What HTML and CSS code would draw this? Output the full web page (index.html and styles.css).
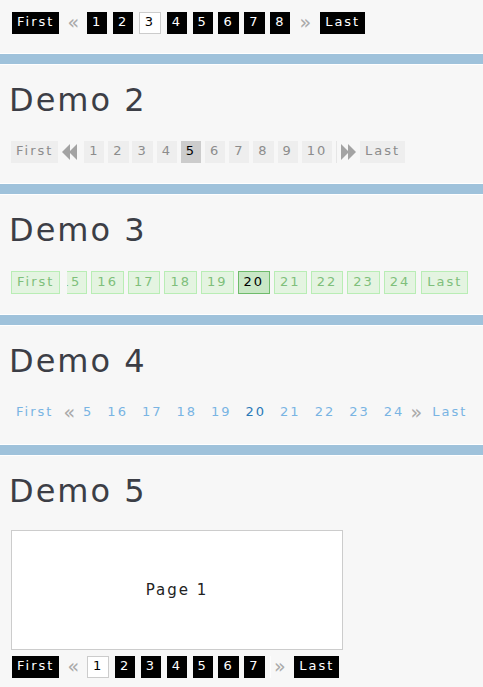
FILE: index.html
```html
<!DOCTYPE html>
<html lang="en">

<head>
    <meta charset="UTF-8">
    <title>jPages demos</title>
    <link rel="stylesheet" href="styles.css">
</head>

<body>

    <div class="demo demo-top">
        <div class="pager pager-black">
            <a href="#">First</a>
            <span class="arrow">&laquo;</span>
            <a href="#">1</a>
            <a href="#">2</a>
            <a href="#" class="current">3</a>
            <a href="#">4</a>
            <a href="#">5</a>
            <a href="#">6</a>
            <a href="#">7</a>
            <a href="#">8</a>
            <span class="arrow next">&raquo;</span>
            <a href="#">Last</a>
        </div>
    </div>
    <div class="bar"></div>

    <div class="demo">
        <h2>Demo 2</h2>
        <div class="pager pager-grey">
            <a href="#">First</a>
            <span class="icon prev">
                <svg width="15" height="16" viewBox="0 0 15 16"><polygon points="0,8 8,0 8,16" /><polygon points="7,8 15,0 15,16" /></svg>
            </span>
            <a href="#">1</a>
            <a href="#">2</a>
            <a href="#">3</a>
            <a href="#">4</a>
            <a href="#" class="current">5</a>
            <a href="#">6</a>
            <a href="#">7</a>
            <a href="#">8</a>
            <a href="#">9</a>
            <a href="#">10</a>
            <span class="icon next">
                <svg width="15" height="16" viewBox="0 0 15 16"><polygon points="0,0 8,8 0,16" /><polygon points="7,0 15,8 7,16" /></svg>
            </span>
            <a href="#">Last</a>
        </div>
    </div>
    <div class="bar"></div>

    <div class="demo">
        <h2>Demo 3</h2>
        <div class="pager pager-green">
            <a href="#">First</a>
            <a href="#" class="partial">15</a>
            <a href="#">16</a>
            <a href="#">17</a>
            <a href="#">18</a>
            <a href="#">19</a>
            <a href="#" class="current">20</a>
            <a href="#">21</a>
            <a href="#">22</a>
            <a href="#">23</a>
            <a href="#">24</a>
            <a href="#" class="last">Last</a>
        </div>
    </div>
    <div class="bar"></div>

    <div class="demo">
        <h2>Demo 4</h2>
        <div class="pager pager-blue">
            <a href="#">First</a>
            <span class="arrow">&laquo;</span>
            <a href="#" class="partial">5</a>
            <a href="#">16</a>
            <a href="#">17</a>
            <a href="#">18</a>
            <a href="#">19</a>
            <a href="#" class="current">20</a>
            <a href="#">21</a>
            <a href="#">22</a>
            <a href="#">23</a>
            <a href="#">24</a>
            <span class="arrow next">&raquo;</span>
            <a href="#">Last</a>
        </div>
    </div>
    <div class="bar"></div>

    <div class="demo demo-five">
        <h2>Demo 5</h2>
        <div class="page-box">Page 1</div>
        <div class="pager pager-black">
            <a href="#">First</a>
            <span class="arrow">&laquo;</span>
            <a href="#" class="current">1</a>
            <a href="#">2</a>
            <a href="#">3</a>
            <a href="#">4</a>
            <a href="#">5</a>
            <a href="#">6</a>
            <a href="#">7</a>
            <span class="arrow next split">&raquo;</span>
            <a href="#">Last</a>
        </div>
    </div>

</body>

</html>
```

FILE: styles.css
```css
* {
    margin: 0;
    padding: 0;
}

body {
    font-family: "DejaVu Sans", Verdana, sans-serif;
    background: #f7f7f7;
    color: #3c3e46;
}

.demo {
    padding: 17px 11px 20px;
}

.demo-top {
    padding-top: 12px;
    padding-bottom: 19px;
}

.bar {
    height: 10px;
    background: #9fc2db;
    border-top: 1px solid #fff;
    border-bottom: 1px solid #fff;
}

h2 {
    font-size: 32px;
    font-weight: normal;
    line-height: 37px;
    letter-spacing: 2px;
    margin: 0 0 22px -2px;
    color: #3c3e46;
}

/* shared pager */
.pager {
    display: flex;
    align-items: center;
    gap: 4px;
    font-size: 13px;
}

.pager a,
.pager span {
    display: flex;
    align-items: center;
    height: 22px;
    padding: 0 5px 4px;
    box-sizing: border-box;
    letter-spacing: 2px;
    text-decoration: none;
    flex-shrink: 0;
}

.pager .arrow {
    width: 14px;
    padding: 0 0 2px;
    justify-content: center;
    letter-spacing: 0;
    font-size: 19px;
    color: #aaa;
}

/* black pager (demo 1 and 5) */
.pager-black {
    gap: 5.6px;
    margin-left: 1px;
}

.pager-black a {
    background: #000;
    color: #fff;
}

.pager-black a.current {
    background: #fff;
    color: #000;
    border: 1px solid #ccc;
    padding-bottom: 3px;
}

.pager-black .arrow {
    width: 16.5px;
}

.pager-black .arrow.next {
    width: 18.5px;
}

.pager-black .arrow.split {
    border-left: 1px solid #fdfdfd;
}

/* grey pager (demo 2) */
.pager-grey {
    gap: 3.9px;
}

.pager-grey a {
    background: #eee;
    color: #8c8c8c;
}

.pager-grey a.current {
    background: #ccc;
    color: #000;
}

.pager-grey .icon {
    padding: 0;
    width: 18px;
}

.pager-grey .icon.next {
    width: auto;
    padding-left: 4px;
    border-left: 1px solid #e6e6e6;
}

.pager-grey svg {
    fill: #a3a3a3;
}

/* green pager (demo 3) */
.pager-green a {
    height: 23px;
    padding-bottom: 3px;
    background: #e4f4e1;
    border: 1px solid #b9edb5;
    color: #7fbf7b;
}

.pager-green a.current {
    background: #c9e7c6;
    border-color: #6fbb6b;
    color: #000;
}

.pager-green a.partial {
    width: 20px;
    margin-left: 3px;
    border-left: none;
    justify-content: flex-end;
    overflow: hidden;
}

.pager-green a.last {
    margin-left: 1px;
}

/* blue pager (demo 4) */
.pager-blue a {
    color: #79b4e3;
}

.pager-blue a.current {
    color: #2a79b8;
}

.pager-blue a.partial {
    width: 18px;
    justify-content: flex-end;
}

.pager-blue .arrow.next {
    margin-left: -4px;
}

/* demo 5 */
.page-box {
    display: flex;
    justify-content: center;
    align-items: center;
    width: 332px;
    height: 120px;
    box-sizing: border-box;
    margin: -2px 0 6px;
    background: #fff;
    border: 1px solid #ccc;
    font-size: 15px;
    letter-spacing: 2px;
    color: #222;
}
```
